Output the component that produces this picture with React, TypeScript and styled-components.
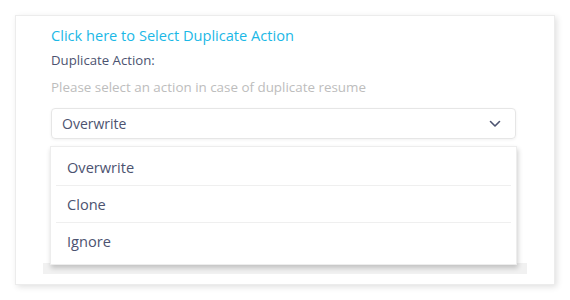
import React from 'react';
import styled, { createGlobalStyle } from 'styled-components';

const GlobalStyle = createGlobalStyle`
  html, body {
    margin: 0;
    padding: 0;
    background: #ffffff;
  }
  body {
    font-family: "Open Sans", "Noto Sans", sans-serif;
  }
`;

const Page = styled.div`
  width: 570px;
  height: 300px;
  box-sizing: border-box;
  padding: 15px;
`;

const Card = styled.div`
  height: 270px;
  box-sizing: border-box;
  background: #fff;
  border: 1px solid #ececec;
  box-shadow: 2px 2px 6px rgba(0, 0, 0, 0.12);
  padding: 9px 38px 0 35px;
  display: flex;
  flex-direction: column;
`;

const LinkText = styled.a`
  color: #1bb8e6;
  font-size: 14.6px;
  line-height: 20px;
  cursor: pointer;
`;

const Label = styled.div`
  margin-top: 6px;
  color: #4c5370;
  font-size: 13.2px;
  line-height: 19px;
`;

const Hint = styled.div`
  margin-top: 9px;
  color: #bdbdbd;
  font-size: 13.4px;
  line-height: 17px;
`;

const SelectWrap = styled.div`
  position: relative;
  margin-top: 12px;
`;

const SelectBox = styled.div`
  height: 31px;
  box-sizing: border-box;
  border: 1px solid #e6e6e6;
  border-radius: 4px;
  box-shadow: 0 1px 3px rgba(0, 0, 0, 0.06);
  display: flex;
  align-items: center;
  justify-content: space-between;
  padding: 0 14px 0 10px;
  color: #4c5370;
  font-size: 14px;
`;

const Menu = styled.ul`
  position: absolute;
  top: 38px;
  left: -1px;
  right: -1px;
  margin: 0;
  padding: 2px 5px 4px;
  list-style: none;
  background: #fff;
  border: 1px solid #ededed;
  box-shadow: 1px 3px 5px rgba(0, 0, 0, 0.2);
  z-index: 2;
`;

const MenuItem = styled.li<{ $last?: boolean }>`
  height: 36px;
  display: flex;
  align-items: center;
  padding-left: 11px;
  color: #4c5370;
  font-size: 14.6px;
  border-bottom: 1px solid ${(p) => (p.$last ? 'transparent' : '#efefef')};
`;

const Underlay = styled.div`
  margin: 124px -11px 0 -8px;
  height: 11px;
  background: #f1f1f1;
`;

const Chevron = () => (
  <svg width="12" height="8" viewBox="0 0 12 8" fill="none">
    <path d="M1.5 1.5 L6 6 L10.5 1.5" stroke="#4c5370" strokeWidth="1.6" strokeLinecap="round" strokeLinejoin="round" />
  </svg>
);

const options = ['Overwrite', 'Clone', 'Ignore'];

export default function App() {
  return (
    <>
      <GlobalStyle />
      <Page>
        <Card>
          <LinkText>Click here to Select Duplicate Action</LinkText>
          <Label>Duplicate Action:</Label>
          <Hint>Please select an action in case of duplicate resume</Hint>
          <SelectWrap>
            <SelectBox>
              <span>Overwrite</span>
              <Chevron />
            </SelectBox>
            <Menu>
              {options.map((o, i) => (
                <MenuItem key={o} $last={i === options.length - 1}>
                  {o}
                </MenuItem>
              ))}
            </Menu>
            <Underlay />
          </SelectWrap>
        </Card>
      </Page>
    </>
  );
}
